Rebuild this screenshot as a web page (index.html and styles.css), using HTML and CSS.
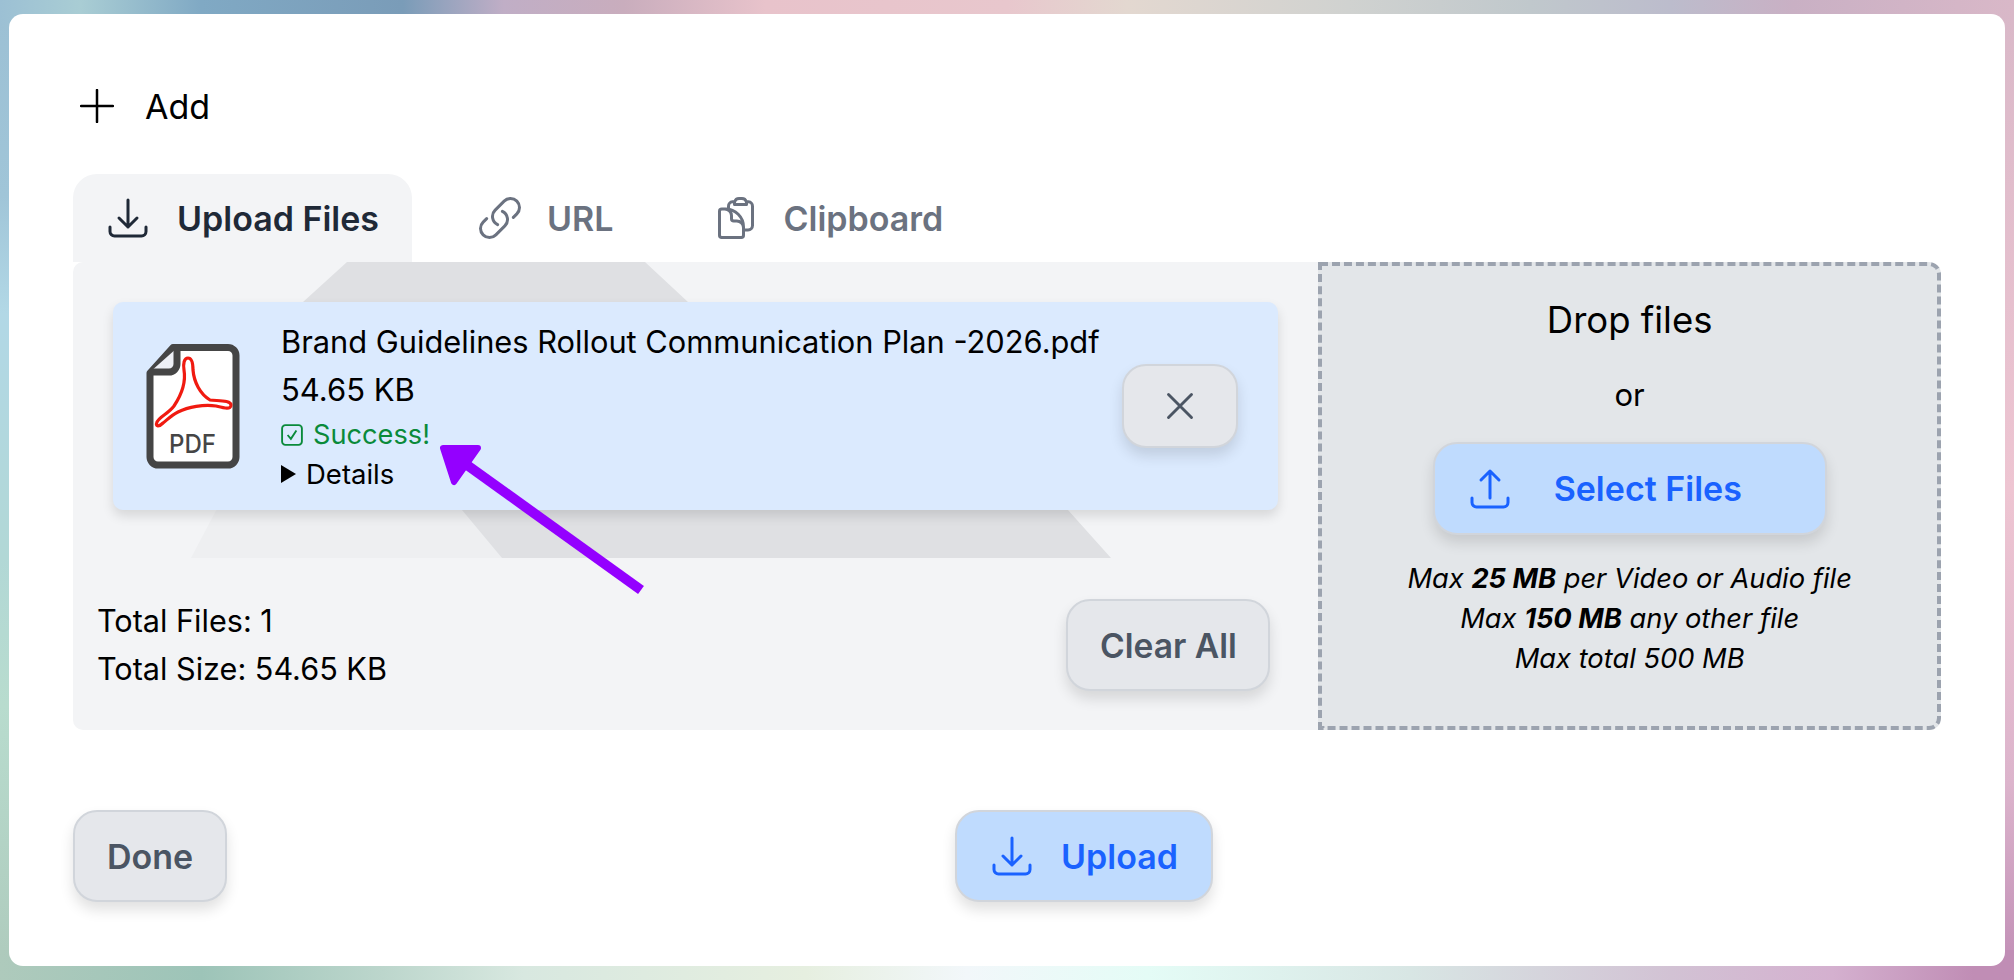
FILE: index.html
```html
<!DOCTYPE html>
<html>
<head>
    <title>Add files</title>
    <link rel="stylesheet" href="styles.css">
</head>
<body>
    <div class="dialog">
        <div class="add-title">
            <svg class="icon-plus" viewBox="0 0 34 34"><path d="M17 1v32M1 17h32"/></svg>
            <span>Add</span>
        </div>

        <div class="tabs">
            <div class="tab active">
                <svg class="icon" viewBox="0 0 24 24"><path d="M3 16.5v2.25A2.25 2.25 0 005.25 21h13.5A2.25 2.25 0 0021 18.75V16.5M16.5 12L12 16.5m0 0L7.5 12m4.5 4.5V3"/></svg>
                <span>Upload Files</span>
            </div>
            <div class="tab">
                <svg class="icon" viewBox="0 0 24 24"><path d="M13.19 8.688a4.5 4.5 0 011.242 7.244l-4.5 4.5a4.5 4.5 0 01-6.364-6.364l1.757-1.757m13.35-.622l1.757-1.757a4.5 4.5 0 00-6.364-6.364l-4.5 4.5a4.5 4.5 0 001.242 7.244"/></svg>
                <span>URL</span>
            </div>
            <div class="tab">
                <svg class="icon" viewBox="0 0 24 24"><path d="M8.25 7.5V6.108c0-1.135.845-2.098 1.976-2.192.373-.03.748-.057 1.123-.08M15.75 18H18a2.25 2.25 0 002.25-2.25V6.108c0-1.135-.845-2.098-1.976-2.192a48.424 48.424 0 00-1.123-.08M15.75 18.75v-1.875a3.375 3.375 0 00-3.375-3.375h-1.5a1.125 1.125 0 01-1.125-1.125v-1.5A3.375 3.375 0 006.375 7.5H5.25m11.9-3.664A2.251 2.251 0 0015 2.25h-1.5a2.251 2.251 0 00-2.15 1.586m5.8 0c.065.21.1.433.1.664v.75h-6V4.5c0-.231.035-.454.1-.664M6.75 7.5H4.875c-.621 0-1.125.504-1.125 1.125v12c0 .621.504 1.125 1.125 1.125h9.75c.621 0 1.125-.504 1.125-1.125V16.5a9 9 0 00-9-9z"/></svg>
                <span>Clipboard</span>
            </div>
        </div>

        <div class="panel">
            <div class="file-pane">
                <svg class="watermark" viewBox="0 0 1245 296">
                    <polygon class="wm-light" points="274,0 118,296 429,296 300,60"/>
                    <polygon class="wm-dark" points="274,0 572,0 615,40 995,248 1038,296 429,296 389,248 230,40"/>
                </svg>
                <div class="file-card">
                    <svg class="pdf-icon" viewBox="0 0 94 125">
                        <path class="pdf-page" d="M27 3.5H82a8 8 0 0 1 8 8V113a8 8 0 0 1-8 8H12a8 8 0 0 1-8-8V29z"/>
                        <path class="pdf-fold" d="M31 4V20a8 8 0 0 1-8 8H4"/>
                        <path class="pdf-swirl" d="M42 14C38 14 37 20 38 26C40 38 36 50 28 62C22 70 14 72 11 78C9 83 13 83 17 79C22 75 26 71 32 68C42 63 58 60 70 62C78 64 85 66 85 61C85 56 72 57 64 56C54 50 48 38 47 26C47 18 45 14 42 14Z"/>
                        <text class="pdf-label" x="23" y="109" textLength="47" lengthAdjust="spacingAndGlyphs">PDF</text>
                    </svg>
                    <div class="file-info">
                        <div class="file-name">Brand Guidelines Rollout Communication Plan -2026.pdf</div>
                        <div class="file-size">54.65 KB</div>
                        <div class="file-status">
                            <svg class="icon-check" viewBox="0 0 20 20"><rect x="1" y="1" width="18" height="18" rx="3"/><path d="M6 10l3 3.5L14 6"/></svg>
                            <span>Success!</span>
                        </div>
                        <details class="file-details"><summary>Details</summary></details>
                    </div>
                    <button class="btn btn-remove">
                        <svg class="icon" viewBox="0 0 24 24"><path d="M6 18L18 6M6 6l12 12"/></svg>
                    </button>
                </div>
                <div class="summary">
                    <div class="totals">
                        <div>Total Files: 1</div>
                        <div>Total Size: 54.65 KB</div>
                    </div>
                    <button class="btn btn-clear">Clear All</button>
                </div>
            </div>

            <div class="dropzone">
                <div class="drop-title">Drop files</div>
                <div class="drop-or">or</div>
                <button class="btn btn-primary btn-select">
                    <svg class="icon" viewBox="0 0 24 24"><path d="M3 16.5v2.25A2.25 2.25 0 005.25 21h13.5A2.25 2.25 0 0021 18.75V16.5m-13.5-9L12 3m0 0l4.5 4.5M12 3v13.5"/></svg>
                    <span>Select Files</span>
                </button>
                <div class="limits">
                    <div>Max <b>25 MB</b> per Video or Audio file</div>
                    <div>Max <b>150 MB</b> any other file</div>
                    <div>Max total 500 MB</div>
                </div>
            </div>
        </div>

        <div class="footer">
            <button class="btn btn-done">Done</button>
            <button class="btn btn-primary btn-upload">
                <svg class="icon" viewBox="0 0 24 24"><path d="M3 16.5v2.25A2.25 2.25 0 005.25 21h13.5A2.25 2.25 0 0021 18.75V16.5M16.5 12L12 16.5m0 0L7.5 12m4.5 4.5V3"/></svg>
                <span>Upload</span>
            </button>
            <span></span>
        </div>
    </div>

    <svg class="callout" viewBox="0 0 220 170">
        <line x1="37" y1="30" x2="211" y2="155"/>
        <polygon points="13,13 48,13 24,47"/>
    </svg>
</body>
</html>
```

FILE: styles.css
```css
* {
    box-sizing: border-box;
}
html, body {
    height: 100%;
}
body {
    margin: 0;
    padding: 14px 9px;
    font-family: Inter, "Noto Sans", sans-serif;
    color: #000000;
    background:
        linear-gradient(90deg, #9cc0d4 0%, #a9cdd4 4%, #80a9c4 10%, #7a9cb8 20%, #c0aec6 25%, #c9adbd 31%, #e8c3cb 38%, #e8c7cd 50%, #e3d8d0 56%, #d0d2d0 67%, #c0c8cc 76%, #bcbccc 83%, #c9b0c4 89%, #d9b8c8 100%) top / 100% 30px no-repeat,
        linear-gradient(90deg, #aecabc 0%, #9dc4b8 10%, #bcd6cc 19%, #d8e8e0 26%, #e6efe0 40%, #f2f7fa 48%, #e4fcf6 57%, #d8e6e4 70%, #d2c2d4 83%, #d4b0cf 91%, #c08db5 98%, #c08db5 100%) bottom / 100% 30px no-repeat,
        linear-gradient(180deg, #9cc0d4 0%, #a0c5d8 20%, #b2d8e6 32%, #b2d8d6 57%, #b8dcce 72%, #aecabc 100%) left / 30px 100% no-repeat,
        linear-gradient(180deg, #d9b8c8 0%, #eec5d2 50%, #dcb4cc 80%, #c08db5 100%) right / 30px 100% no-repeat,
        #ffffff;
}
button {
    font-family: inherit;
}

.dialog {
    height: 952px;
    padding: 76px 64px 0 64px;
    background-color: #ffffff;
    border-radius: 14px;
}
.add-title {
    display: flex;
    align-items: center;
    height: 32px;
    margin-left: 7px;
    font-size: 34px;
    gap: 31px;
}
.icon-plus {
    width: 34px;
    height: 34px;
    fill: none;
    stroke: #000000;
    stroke-width: 2.5;
    stroke-linecap: round;
}

.icon {
    flex: none;
    width: 48px;
    height: 48px;
    fill: none;
    stroke: currentColor;
    stroke-width: 1.5;
    stroke-linecap: round;
    stroke-linejoin: round;
}

.tabs {
    display: flex;
    gap: 33px;
    margin-top: 52px;
}
.tab {
    display: flex;
    align-items: center;
    gap: 23px;
    height: 88px;
    padding: 0 35px 0 31px;
    border-radius: 24px 24px 0 0;
    font-size: 34px;
    font-weight: 600;
    color: #6b7280;
}
.tab.active {
    gap: 25px;
    padding-right: 33px;
    background-color: #f3f4f6;
    color: #1f2937;
}

.panel {
    display: grid;
    grid-template-columns: 2fr 1fr;
    height: 468px;
}
.file-pane {
    position: relative;
    display: flex;
    flex-direction: column;
    justify-content: space-between;
    background-color: #f3f4f6;
    border-radius: 10px 0 0 10px;
}
.watermark {
    position: absolute;
    top: 0;
    left: 0;
    width: 1245px;
    height: 296px;
}
.wm-light {
    fill: #eeeff1;
}
.wm-dark {
    fill: #dfe0e3;
}

.file-card {
    position: relative;
    display: flex;
    align-items: center;
    height: 208px;
    margin: 40px 40px 0 40px;
    padding: 0 40px 0 33px;
    background-color: #dbeafe;
    border-radius: 10px;
    box-shadow: 0 6px 12px rgba(0, 0, 0, 0.12);
}
.pdf-icon {
    flex: none;
    width: 94px;
    height: 125px;
    margin-right: 41px;
}
.pdf-page {
    fill: #ffffff;
    stroke: #454545;
    stroke-width: 7;
    stroke-linejoin: round;
}
.pdf-fold {
    fill: #eef0f6;
    stroke: #454545;
    stroke-width: 7;
}
.pdf-swirl {
    fill: none;
    stroke: #f01a10;
    stroke-width: 3.2;
}
.pdf-label {
    font-size: 26px;
    font-weight: 500;
    fill: #454545;
}
.file-info {
    flex: 1;
    min-width: 0;
    white-space: nowrap;
}
.file-name {
    font-size: 30.8px;
    line-height: 48px;
}
.file-size {
    font-size: 31px;
    line-height: 48px;
}
.file-status {
    display: flex;
    align-items: center;
    gap: 10px;
    margin-top: 4px;
    font-size: 27.2px;
    line-height: 34px;
    color: #0a8a3a;
}
.icon-check {
    width: 22px;
    height: 22px;
    fill: none;
    stroke: #0a8a3a;
    stroke-width: 1.7;
}
.file-details {
    font-size: 27.5px;
    line-height: 40px;
    margin-top: 2px;
}
.file-details summary {
    display: flex;
    align-items: center;
    gap: 10px;
    list-style: none;
}
.file-details summary::before {
    content: "";
    width: 0;
    height: 0;
    border-left: 15px solid #000000;
    border-top: 9px solid transparent;
    border-bottom: 9px solid transparent;
}

.btn {
    display: flex;
    align-items: center;
    justify-content: center;
    padding: 0;
    border: 2px solid #d1d5db;
    border-radius: 24px;
    background-color: #e5e7eb;
    color: #4b5563;
    font-size: 34px;
    font-weight: 600;
    box-shadow: 0 8px 14px rgba(0, 0, 0, 0.12);
}
.btn-primary {
    background-color: #bfdbfe;
    color: #1a62ff;
}
.btn-remove {
    flex: none;
    width: 116px;
    height: 84px;
}
.btn-remove .icon {
    width: 46px;
    height: 46px;
}
.summary {
    position: relative;
    display: flex;
    align-items: center;
    justify-content: space-between;
    padding: 0 48px 37px 24px;
}
.totals {
    font-size: 30.6px;
    line-height: 48px;
}
.btn-clear {
    width: 204px;
    height: 92px;
    font-size: 33.6px;
}

.dropzone {
    display: flex;
    flex-direction: column;
    align-items: center;
    padding-top: 30px;
    background-color: #e3e6e9;
    border: 4px dashed #9ca3af;
    border-radius: 0 12px 12px 0;
}
.drop-title {
    font-size: 36.5px;
    line-height: 48px;
}
.drop-or {
    margin-top: 27px;
    font-size: 31px;
    line-height: 48px;
}
.btn-select {
    justify-content: flex-start;
    gap: 40px;
    width: 394px;
    height: 93px;
    margin-top: 23px;
    padding-left: 31px;
}
.limits {
    margin-top: 24px;
    font-size: 27.3px;
    font-style: italic;
    line-height: 40px;
    text-align: center;
}

.footer {
    display: flex;
    justify-content: space-between;
    margin-top: 80px;
}
.btn-done {
    width: 154px;
    height: 92px;
}
.btn-upload {
    gap: 25px;
    height: 92px;
    padding: 0 33px 0 31px;
}

.callout {
    position: absolute;
    top: 435px;
    left: 430px;
    width: 220px;
    height: 170px;
}
.callout line {
    stroke: #9400ff;
    stroke-width: 10;
}
.callout polygon {
    fill: #9400ff;
    stroke: #9400ff;
    stroke-width: 6;
    stroke-linejoin: round;
}
```
